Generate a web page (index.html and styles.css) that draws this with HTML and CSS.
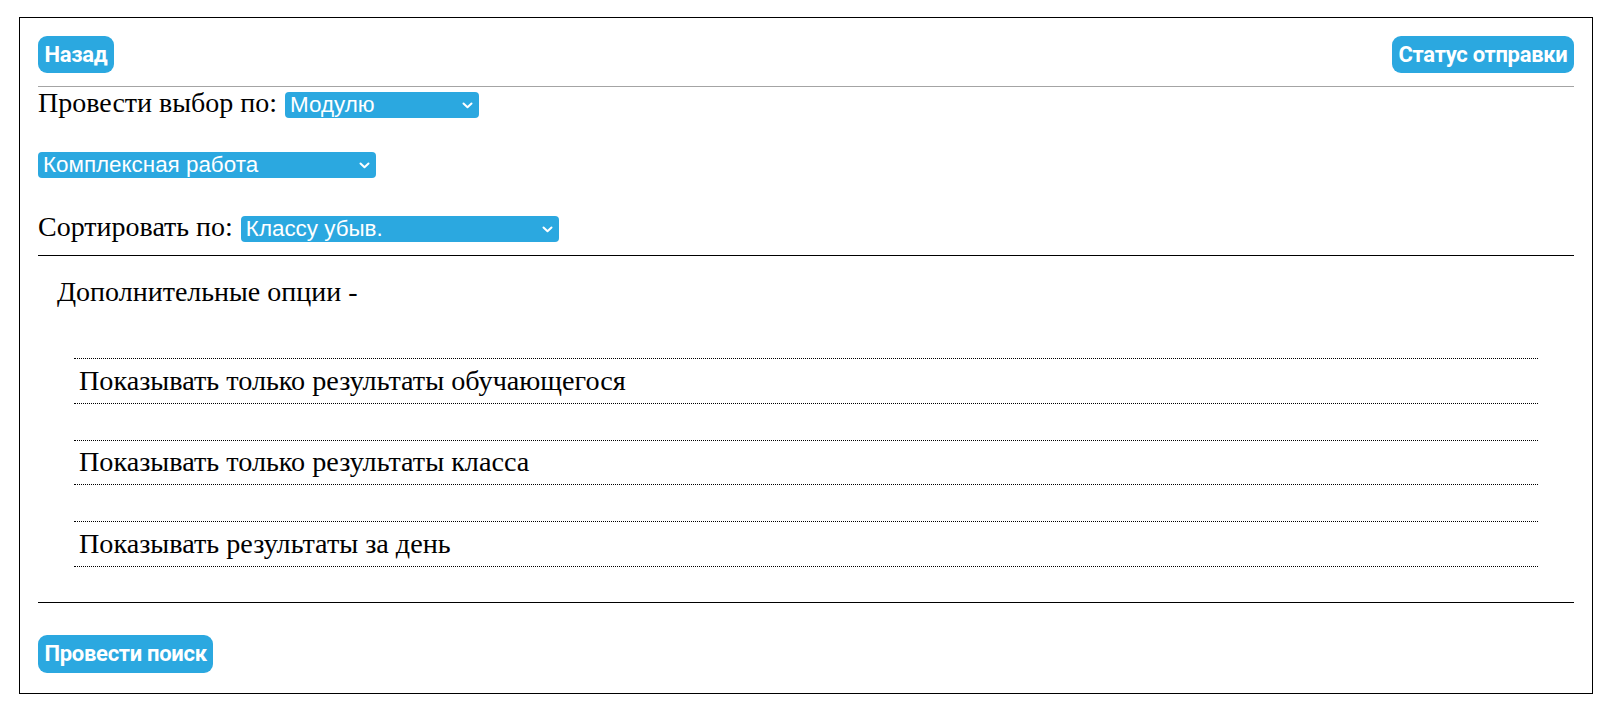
FILE: index.html
```html
<!DOCTYPE html>
<html lang="ru">
<head>
<meta charset="utf-8">
<title>Поиск результатов</title>
<link rel="stylesheet" href="styles.css">
</head>
<body>
<div class="panel">
  <div class="topbar">
    <a class="btn" href="#">Назад</a>
    <a class="btn" href="#">Статус отправки</a>
  </div>
  <hr class="rule rule-gray">
  <div class="filters">
    <div class="row">
      <span class="label">Провести выбор по:</span>
      <div class="select select-module"><span>Модулю</span><svg class="chev" viewBox="0 0 11 7" width="11" height="7"><path d="M1.5 1.5 L5.5 5.3 L9.5 1.5"/></svg></div>
    </div>
    <div class="row">
      <div class="select select-work"><span>Комплексная работа</span><svg class="chev" viewBox="0 0 11 7" width="11" height="7"><path d="M1.5 1.5 L5.5 5.3 L9.5 1.5"/></svg></div>
    </div>
    <div class="row">
      <span class="label">Сортировать по:</span>
      <div class="select select-sort"><span>Классу убыв.</span><svg class="chev" viewBox="0 0 11 7" width="11" height="7"><path d="M1.5 1.5 L5.5 5.3 L9.5 1.5"/></svg></div>
    </div>
  </div>
  <hr class="rule rule-black rule-after-filters">
  <div class="extras">
    <div class="extras-title">Дополнительные опции -</div>
    <div class="options">
      <div class="option">Показывать только результаты обучающегося</div>
      <div class="option">Показывать только результаты класса</div>
      <div class="option">Показывать результаты за день</div>
    </div>
  </div>
  <hr class="rule rule-black rule-after-extras">
  <div class="actions">
    <a class="btn btn-search" href="#">Провести поиск</a>
  </div>
</div>
</body>
</html>
```
FILE: styles.css
```css
html, body {
  margin: 0;
  padding: 0;
  background: #ffffff;
}

body {
  font-family: "Liberation Serif", "Times New Roman", serif;
  color: #000;
}

.panel {
  box-sizing: border-box;
  width: 1574px;
  margin: 17px 0 0 19px;
  padding: 18px 18px 20px 18px;
  border: 1px solid #000;
}

.topbar {
  display: flex;
  justify-content: space-between;
  align-items: center;
}

.btn {
  display: inline-block;
  background: #2ba8e0;
  color: #fff;
  text-decoration: none;
  font-family: Roboto, Inter, "Liberation Sans", sans-serif;
  font-weight: 700;
  font-size: 22px;
  line-height: 25px;
  padding: 6px 6.5px;
  border-radius: 9px;
  letter-spacing: -0.3px;
}

.btn-search {
  padding-top: 6.5px;
  padding-bottom: 6.5px;
}

.rule {
  border: 0;
  height: 0;
  margin: 0;
}

.rule-gray {
  border-top: 1px solid #a4a4a4;
  margin-top: 13px;
}

.rule-black {
  border-top: 1px solid #000;
}

.rule-after-filters {
  margin-top: 12px;
}

.rule-after-extras {
  margin-top: 35px;
}

.filters {
  display: flex;
  flex-direction: column;
  gap: 33px;
}

.row {
  display: flex;
  align-items: baseline;
  gap: 8px;
}

.label {
  font-size: 28px;
  line-height: 32px;
}

.select {
  box-sizing: border-box;
  display: flex;
  align-items: center;
  justify-content: space-between;
  height: 26px;
  padding: 0 6px 0 5px;
  background: #2ba8e0;
  color: #fff;
  border-radius: 4px;
  font-family: "Liberation Sans", Arial, sans-serif;
  font-size: 22.4px;
  line-height: 26px;
}

.select-module { width: 194px; }
.select-work { width: 338px; }
.select-sort { width: 318px; }

.chev {
  flex: none;
  fill: none;
  stroke: #fff;
  stroke-width: 2;
  stroke-linecap: round;
  stroke-linejoin: round;
}

.extras {
  padding-top: 20px;
}

.extras-title {
  font-size: 28px;
  line-height: 32px;
  padding-left: 19px;
}

.options {
  display: flex;
  flex-direction: column;
  gap: 36px;
  margin: 50px 36px 0 36px;
}

.option {
  border-top: 1px dotted #000;
  border-bottom: 1px dotted #000;
  padding: 5.75px 5px;
  font-size: 28.2px;
  line-height: 32px;
}

.actions {
  margin-top: 32px;
  display: flex;
}
```
